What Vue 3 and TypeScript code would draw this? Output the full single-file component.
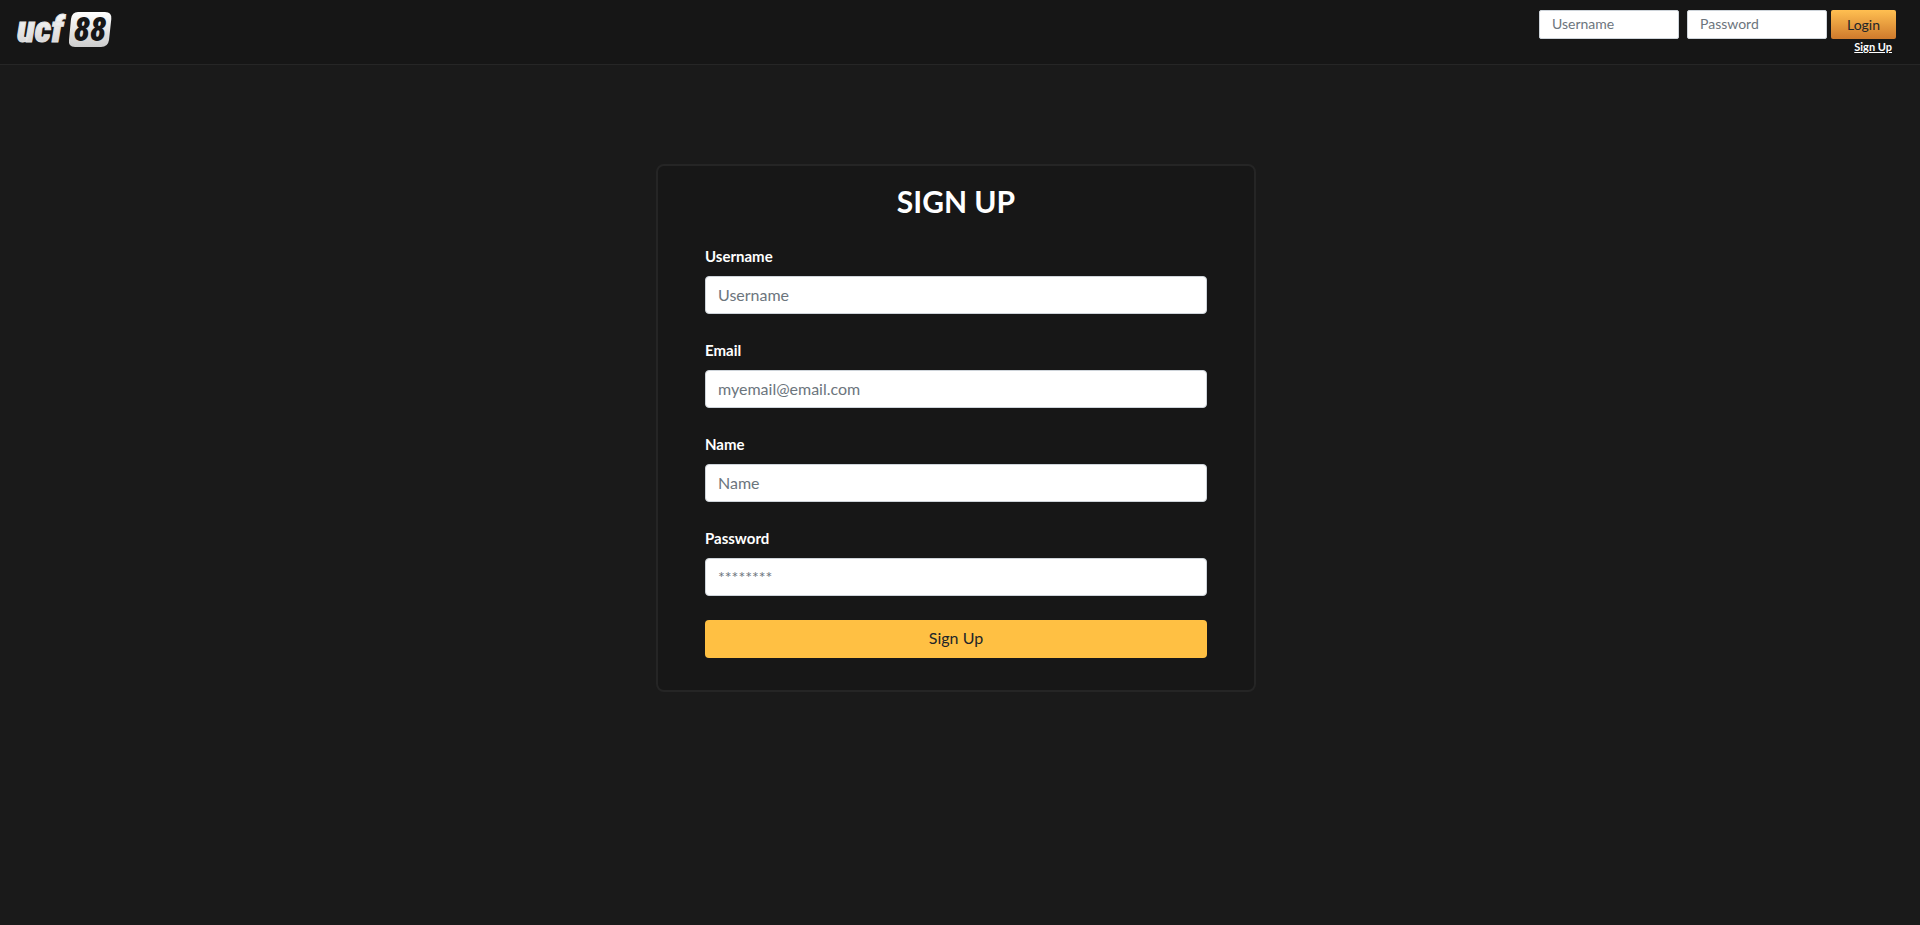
<script setup lang="ts">
interface Field {
  id: string
  label: string
  type: string
  placeholder: string
}

const fields: Field[] = [
  { id: 'username', label: 'Username', type: 'text', placeholder: 'Username' },
  { id: 'email', label: 'Email', type: 'email', placeholder: 'myemail@email.com' },
  { id: 'name', label: 'Name', type: 'text', placeholder: 'Name' },
  { id: 'password', label: 'Password', type: 'password', placeholder: '********' },
]
</script>

<template>
  <div class="page">
    <header class="topbar">
      <a class="brand" href="#" aria-label="ucf88">
        <svg class="logo" viewBox="0 0 96 36" width="96" height="36">
          <defs>
            <linearGradient id="silver" x1="0" y1="0" x2="0" y2="1">
              <stop offset="0" stop-color="#ffffff" />
              <stop offset="1" stop-color="#cdcdcd" />
            </linearGradient>
          </defs>
          <text class="word" x="1" y="30">ucf</text>
          <path d="M62 0H89Q96 0 95.300 7L93 28Q92 35 85 35H59Q52 35 53 28L55 7Q56 0 62 0Z" fill="url(#silver)" />
          <text class="digits" x="74" y="29" text-anchor="middle">88</text>
        </svg>
      </a>
      <form class="login" @submit.prevent>
        <div class="login-row">
          <input class="control small" type="text" placeholder="Username" aria-label="Username" />
          <input class="control small" type="password" placeholder="Password" aria-label="Password" />
          <button class="login-button" type="submit">Login</button>
        </div>
        <a class="signup-link" href="#signup">Sign Up</a>
      </form>
    </header>

    <main class="content">
      <form id="signup" class="card" @submit.prevent>
        <h1 class="title">SIGN UP</h1>
        <div v-for="field in fields" :key="field.id" class="field">
          <label class="label" :for="field.id">{{ field.label }}</label>
          <input :id="field.id" class="control" :type="field.type" :placeholder="field.placeholder" />
        </div>
        <button class="submit" type="submit">Sign Up</button>
      </form>
    </main>
  </div>
</template>

<style>
body {
  margin: 0;
  background: #1a1a1a;
}
</style>

<style scoped>
.page {
  min-height: 100vh;
  box-sizing: border-box;
  background: #1a1a1a;
  color: #fff;
  font-family: Lato, "Noto Sans", sans-serif;
  font-size: 16px;
  line-height: 24px;
}

.topbar {
  display: flex;
  justify-content: space-between;
  align-items: flex-start;
  box-sizing: border-box;
  min-height: 65px;
  padding: 10px 24px 6px 16px;
  background: #161616;
  border-bottom: 1px solid #262626;
}

.brand {
  display: block;
  padding-top: 2px;
}

.logo {
  display: block;
  overflow: visible;
}

.word,
.digits {
  font-family: "Roboto Condensed", Roboto, sans-serif;
  font-weight: 900;
  font-style: italic;
}

.word {
  font-size: 37px;
  fill: url(#silver);
  stroke: #e4e4e4;
  stroke-width: 1px;
}

.digits {
  font-size: 33px;
  fill: #161616;
}

.login {
  display: flex;
  flex-direction: column;
  align-items: flex-end;
}

.login-row {
  display: flex;
  gap: 4px;
}

.control {
  box-sizing: border-box;
  width: 100%;
  height: 38px;
  padding: 5px 12px 7px;
  border: 1px solid #ced4da;
  border-radius: 4px;
  background: #fff;
  color: #495057;
  font: inherit;
}

.control::placeholder {
  color: #6c757d;
  opacity: 1;
}

.control.small {
  width: 140px;
  height: 29px;
  margin-right: 4px;
  padding: 3px 12px 5px;
  border-radius: 2px;
  font-size: 14px;
  line-height: 20px;
}

.control.small:nth-child(2) {
  margin-right: 0;
}

.login-button {
  width: 65px;
  height: 29px;
  padding: 0;
  border: 0;
  border-radius: 2px;
  background: linear-gradient(#ffbf51, #cf7a2c);
  color: #212529;
  font: inherit;
  font-size: 14px;
}

.signup-link {
  margin-right: 4px;
  color: #fff;
  font-size: 11px;
  font-weight: 700;
  line-height: 16px;
  text-decoration: underline;
}

.content {
  padding: 99px 8px 24px 0;
}

.card {
  box-sizing: border-box;
  max-width: 600px;
  margin: 0 auto;
  padding: 16px 47px 32px;
  border: 2px solid #252525;
  border-radius: 8px;
  background: #171717;
}

.title {
  margin: 0 0 24px;
  font-size: 30px;
  font-weight: 700;
  line-height: 38px;
  text-align: center;
}

.field {
  margin-bottom: 24px;
}

.label {
  display: block;
  margin-bottom: 8px;
  font-size: 15px;
  font-weight: 700;
}

.submit {
  display: block;
  width: 100%;
  height: 38px;
  padding: 0 0 2px;
  border: 0;
  border-radius: 4px;
  background: #ffc043;
  color: #212529;
  font: inherit;
}
</style>
